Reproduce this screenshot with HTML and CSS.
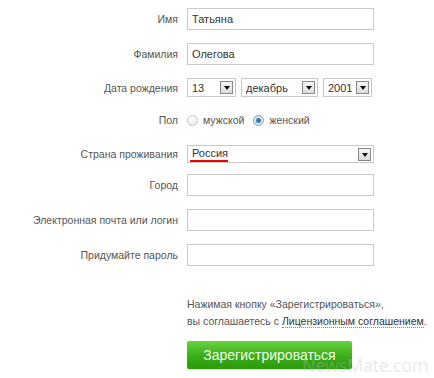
FILE: index.html
```html
<!DOCTYPE html>
<html lang="ru">

<head>
  <meta charset="UTF-8" />
  <meta name="viewport" content="width=device-width, initial-scale=1.0" />
  <title>Регистрация</title>
  <link rel="stylesheet" href="styles.css">
</head>

<body>
  <form class="reg">
    <div class="row">
      <label class="label">Имя</label>
      <input class="field" type="text" value="Татьяна" />
    </div>
    <div class="row">
      <label class="label">Фамилия</label>
      <input class="field" type="text" value="Олегова" />
    </div>
    <div class="row">
      <label class="label">Дата рождения</label>
      <div class="date">
        <div class="sel day"><span>13</span><i class="arrow"></i></div>
        <div class="sel month"><span>декабрь</span><i class="arrow"></i></div>
        <div class="sel year"><span>2001</span><i class="arrow"></i></div>
      </div>
    </div>
    <div class="row radios">
      <label class="label">Пол</label>
      <div class="gender">
        <span class="radio"></span><span class="opt">мужской</span>
        <span class="radio on"></span><span class="opt">женский</span>
      </div>
    </div>
    <div class="row country">
      <label class="label">Страна проживания</label>
      <div class="sel wide"><span class="marked">Россия</span><i class="arrow"></i></div>
    </div>
    <div class="row">
      <label class="label">Город</label>
      <input class="field" type="text" />
    </div>
    <div class="row">
      <label class="label">Электронная почта или логин</label>
      <input class="field" type="text" />
    </div>
    <div class="row">
      <label class="label">Придумайте пароль</label>
      <input class="field" type="password" />
    </div>

    <div class="bottom">
      <p class="terms">Нажимая кнопку «Зарегистрироваться»,<br />вы соглашаетесь с <a href="#">Лицензионным соглашением</a>.</p>
      <button type="button" class="submit">Зарегистрироваться</button>
    </div>
  </form>

  <div class="mark">NewsMate.com</div>
</body>

</html>
```

FILE: styles.css
```css
* {
  margin: 0;
  padding: 0;
  box-sizing: border-box;
}

body {
  background: #fff;
  font-family: "Liberation Sans", Arial, sans-serif;
  font-size: 10.5px;
  color: #555;
  width: 434px;
  height: 378px;
  overflow: hidden;
  position: relative;
}

.reg {
  display: flex;
  flex-direction: column;
  gap: 13px;
  padding-top: 8px;
}

.row {
  display: flex;
  align-items: center;
}

.label {
  width: 178px;
  text-align: right;
  margin-right: 9px;
  color: #555;
  font-size: 10.5px;
}

.field {
  width: 187px;
  height: 22px;
  border: 1px solid #c9c9c9;
  padding: 0 4px;
  font-family: inherit;
  font-size: 11px;
  color: #333;
  outline: none;
}

.date {
  display: flex;
  gap: 5px;
}

.sel {
  display: flex;
  align-items: center;
  justify-content: space-between;
  height: 19px;
  border: 1px solid #c9c9c9;
  padding: 0 2px 0 4px;
  color: #333;
  font-size: 11px;
  background: #fff;
}

.day {
  width: 49px;
}

.month {
  width: 77px;
}

.year {
  width: 49px;
}

.arrow {
  width: 13px;
  height: 13px;
  border: 1px solid #888;
  background: linear-gradient(#f6f6f6, #dcdcdc);
  position: relative;
}

.arrow::after {
  content: "";
  position: absolute;
  left: 3px;
  top: 4px;
  border-left: 3px solid transparent;
  border-right: 3px solid transparent;
  border-top: 4px solid #111;
}

.radios {
  height: 20px;
  margin-bottom: 2px;
}

.gender {
  display: flex;
  align-items: center;
}

.radio {
  width: 11px;
  height: 11px;
  border-radius: 50%;
  border: 1px solid #c8c8c8;
  background: radial-gradient(circle at 40% 35%, #fff, #e2e2e2);
  margin-right: 5px;
}

.radio.on {
  border-color: #8a9bb0;
  background: radial-gradient(circle, #2a6fb0 0, #3a86c8 2px, #cfdbe8 3px, #f2f2f2 5px);
}

.opt {
  margin-right: 9px;
  color: #555;
}

.country {
  margin-bottom: -2px;
}

.wide {
  width: 187px;
  height: 18px;
}

.marked {
  border-bottom: 2px solid #e00;
  line-height: 13px;
  margin-left: -2px;
  padding-left: 2px;
}

.bottom {
  padding-left: 187px;
  margin-top: 17px;
}

.terms {
  line-height: 17px;
  color: #555;
  font-size: 10.5px;
  white-space: nowrap;
}

.terms a {
  color: #333;
  text-decoration: none;
  border-bottom: 1px dotted #888;
}

.submit {
  margin-top: 11px;
  width: 165px;
  height: 28px;
  border: none;
  border-radius: 2px;
  background: linear-gradient(#66d43f, #3aad17 55%, #2c9a0c);
  color: #f4fff0;
  font-family: inherit;
  font-size: 14px;
  box-shadow: 0 1px 1px rgba(0, 0, 0, 0.15);
}

.mark {
  position: absolute;
  left: 302px;
  top: 353px;
  font-family: "Open Sans", sans-serif;
  font-size: 18px;
  letter-spacing: -0.3px;
  color: rgba(190, 190, 190, 0.35);
  white-space: nowrap;
}
```
